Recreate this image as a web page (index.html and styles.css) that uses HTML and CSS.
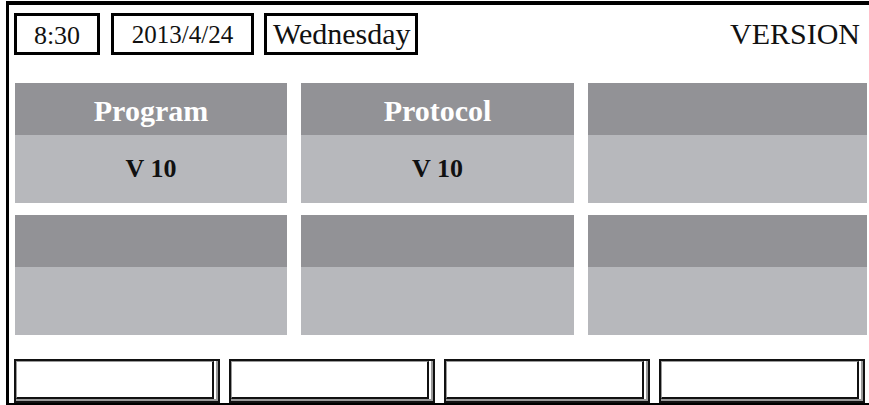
FILE: index.html
```html
<!DOCTYPE html>
<html lang="en">
<head>
  <meta charset="UTF-8">
  <meta name="viewport" content="width=device-width, initial-scale=1.0">
  <title>Version</title>
  <link rel="stylesheet" href="styles.css">
</head>
<body>
  <div class="screen">
    <div class="topbar">
      <div class="box time">8:30</div>
      <div class="box date">2013/4/24</div>
      <div class="box day">Wednesday</div>
      <div class="title">VERSION</div>
    </div>

    <div class="tiles">
      <div class="tile">
        <div class="tile-head">Program</div>
        <div class="tile-body">V 10</div>
      </div>
      <div class="tile">
        <div class="tile-head">Protocol</div>
        <div class="tile-body">V 10</div>
      </div>
      <div class="tile">
        <div class="tile-head"></div>
        <div class="tile-body"></div>
      </div>
      <div class="tile">
        <div class="tile-head"></div>
        <div class="tile-body"></div>
      </div>
      <div class="tile">
        <div class="tile-head"></div>
        <div class="tile-body"></div>
      </div>
      <div class="tile">
        <div class="tile-head"></div>
        <div class="tile-body"></div>
      </div>
    </div>

    <div class="buttons">
      <div class="btn"><div class="btn-face"></div></div>
      <div class="btn"><div class="btn-face"></div></div>
      <div class="btn"><div class="btn-face"></div></div>
      <div class="btn"><div class="btn-face"></div></div>
    </div>
  </div>
</body>
</html>
```

FILE: styles.css
```css
html, body {
  margin: 0;
  padding: 0;
  background-color: #fff;
  overflow: hidden;
}
body {
  font-family: "Liberation Serif", "Times New Roman", serif;
  color: #111;
}
.screen {
  box-sizing: border-box;
  margin: 1px 0 0 6px;
  height: 404px;
  border-top: 4px solid #000;
  border-left: 3px solid #000;
  border-bottom: 2px solid #000;
  padding: 8px 0 0 5px;
}
.topbar {
  display: flex;
  align-items: center;
  height: 42px;
  width: 846px;
}
.box {
  box-sizing: border-box;
  height: 42px;
  border: 3px solid #000;
  display: flex;
  align-items: center;
  justify-content: center;
}
.time {
  width: 86px;
  font-size: 26px;
  padding-top: 3px;
}
.date {
  width: 143px;
  margin-left: 11px;
  font-size: 25px;
  padding-top: 2px;
}
.day {
  width: 154px;
  margin-left: 10px;
  font-size: 30px;
  justify-content: flex-start;
  padding-left: 6px;
}
.title {
  margin-left: auto;
  font-size: 30px;
}
.tiles {
  display: grid;
  grid-template-columns: 272px 273px 279px;
  column-gap: 14px;
  row-gap: 12px;
  margin: 28px 0 0 1px;
}
.tile {
  display: flex;
  flex-direction: column;
  height: 120px;
}
.tile-head {
  height: 52px;
  background-color: #929296;
  color: #fff;
  font-weight: bold;
  font-size: 30px;
  display: flex;
  align-items: center;
  justify-content: center;
  padding-top: 3px;
  box-sizing: border-box;
}
.tile-body {
  flex: 1;
  background-color: #b7b8bc;
  font-weight: bold;
  font-size: 26px;
  display: flex;
  align-items: center;
  justify-content: center;
}
.buttons {
  display: grid;
  grid-template-columns: repeat(4, 206px);
  column-gap: 9px;
  margin-top: 24px;
}
.btn {
  box-sizing: border-box;
  height: 44px;
  border: 2px solid #111;
  padding: 0 4px 2px 0;
  background-color: #fff;
  box-shadow: inset -2px -2px 0 #9a9a9a;
}
.btn-face {
  box-sizing: border-box;
  height: 100%;
  border-top: 1px solid #9a9a9a;
  border-left: 1px solid #9a9a9a;
  border-right: 2px solid #111;
  border-bottom: 2px solid #111;
}
```
